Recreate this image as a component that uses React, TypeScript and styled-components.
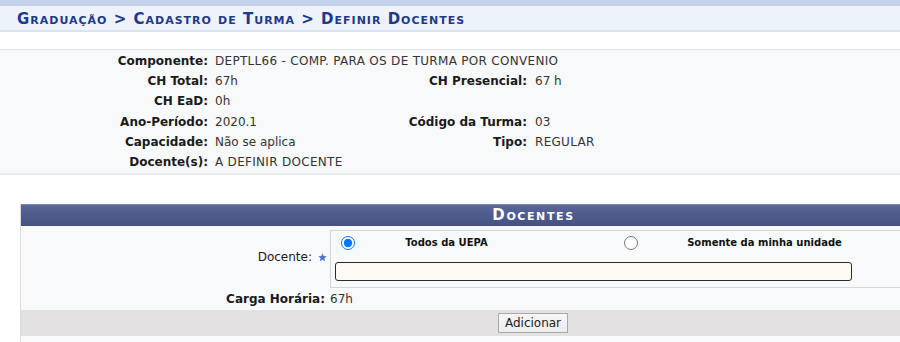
import React from "react";
import styled, { createGlobalStyle } from "styled-components";

const Global = createGlobalStyle`
  html, body { margin: 0; padding: 0; background: #fff; }
  body { font-family: "DejaVu Sans", Verdana, sans-serif; font-size: 12px; color: #222; overflow: hidden; width: 900px; }
`;

const Page = styled.div`
  width: 900px;
  overflow: hidden;
`;

const TopStripe = styled.div`
  height: 6px;
  background: #c4d2eb;
`;

const TitleBar = styled.h2`
  margin: 0;
  height: 26px;
  box-sizing: border-box;
  padding: 5px 0 0 17px;
  background: #eef2fa;
  border-bottom: 2px solid #dbe3f1;
  color: #1e3a87;
  font-size: 15px;
  font-weight: bold;
  font-variant: small-caps;
  letter-spacing: 1px;
  line-height: 16px;
`;

const Spacer = styled.div<{ h: number }>`
  height: ${(p) => p.h}px;
`;

const InfoTable = styled.div`
  display: grid;
  grid-template-columns: 210px 195px 124px 1fr;
  grid-auto-rows: 20.2px;
  align-items: center;
  background: #f8f9fb;
  border-top: 1px solid #e4e4e4;
  border-bottom: 2px solid #e9e9e9;
  padding: 1px 0 1px;
`;

const Label = styled.div`
  text-align: right;
  font-weight: bold;
  color: #1a1a1a;
  padding-right: 2px;
  white-space: nowrap;
`;

const Value = styled.div<{ span?: number; pad?: number; caps?: boolean }>`
  padding-left: ${(p) => p.pad ?? 5}px;
  color: #333;
  white-space: nowrap;
  grid-column: span ${(p) => p.span ?? 1};
  letter-spacing: ${(p) => (p.caps ? "0.3px" : "0")};
`;

const Panel = styled.div`
  margin-left: 20px;
  width: 1025px;
  border-left: 1px solid #dcdcdc;
  border-bottom: 2px solid #e2e2e2;
  background: #f8f9fb;
`;

const PanelHeader = styled.div`
  height: 22px;
  background: linear-gradient(#5a6898 0%, #4e5c8e 45%, #45527f 100%);
  border-top: 1px solid #7d88ad;
  box-sizing: border-box;
  color: #fff;
  text-align: center;
  font-weight: bold;
  font-variant: small-caps;
  font-size: 15px;
  letter-spacing: 1.6px;
  line-height: 20px;
`;

const FormRow = styled.div`
  display: grid;
  grid-template-columns: 309px 1fr;
  align-items: center;
`;

const FormLabel = styled.div<{ bold?: boolean }>`
  text-align: right;
  padding-right: ${(p) => (p.bold ? 5 : 0)}px;
  font-weight: ${(p) => (p.bold ? "bold" : "normal")};
  color: #1a1a1a;
  display: flex;
  justify-content: flex-end;
  align-items: center;
  gap: 6px;
  white-space: nowrap;
`;

const Star = styled.svg`
  width: 9px;
  height: 9px;
  margin-right: 3px;
  margin-top: 1px;
`;

const FieldBox = styled.div`
  margin: 4px 0 0 0;
  border: 1px solid #d6d6d6;
  height: 58px;
  box-sizing: border-box;
  padding: 5px 0 0 4px;
  width: 720px;
`;

const RadioGrid = styled.div`
  display: grid;
  grid-template-columns: 25px 173px 113px 237px;
  align-items: center;
  height: 14px;
`;

const RadioCell = styled.div<{ right?: boolean }>`
  display: flex;
  justify-content: ${(p) => (p.right ? "flex-end" : "flex-start")};
  padding-right: ${(p) => (p.right ? 8 : 0)}px;
  padding-left: ${(p) => (p.right ? 0 : 6)}px;
`;

const Radio = styled.input`
  width: 14px;
  height: 14px;
  margin: 0;
`;

const RadioText = styled.div`
  text-align: center;
  font-size: 10px;
  font-weight: bold;
  color: #111;
  margin-top: -1px;
`;

const TextInput = styled.input`
  display: block;
  margin: 12px 0 0 0;
  width: 517px;
  height: 19px;
  box-sizing: border-box;
  border: 1.5px solid #2b2b2b;
  border-radius: 3px;
  background: #fdf9f3;
`;

const CargaRow = styled.div`
  display: grid;
  grid-template-columns: 309px 1fr;
  height: 22px;
  align-items: center;
`;

const CargaValue = styled.div`
  color: #333;
  padding-left: 0;
`;

const Footer = styled.div`
  background: #e3e1e1;
  height: 26px;
  display: flex;
  justify-content: center;
  align-items: center;
  width: 1025px;
  box-sizing: border-box;
  margin-left: -1px;
  border-left: 1px solid #dcdcdc;
`;

const Button = styled.button`
  font-family: "DejaVu Sans", Verdana, sans-serif;
  font-size: 12px;
  color: #222;
  height: 20px;
  padding: 0 6px;
  background: linear-gradient(#f6f6f6, #ececec);
  border: 1px solid #a9a9a9;
  border-radius: 0;
`;

const BottomStrip = styled.div`
  height: 6px;
`;

const rows: Array<[string, string, string?, string?]> = [
  ["CH Total:", "67h", "CH Presencial:", "67 h"],
  ["CH EaD:", "0h"],
  ["Ano-Período:", "2020.1", "Código da Turma:", "03"],
  ["Capacidade:", "Não se aplica", "Tipo:", "REGULAR"],
  ["Docente(s):", "A DEFINIR DOCENTE"],
];

export default function App() {
  return (
    <Page>
      <Global />
      <TopStripe />
      <TitleBar>Graduação &gt; Cadastro de Turma &gt; Definir Docentes</TitleBar>
      <Spacer h={17} />
      <InfoTable>
        <Label>Componente:</Label>
        <Value span={3} caps>
          DEPTLL66 - COMP. PARA OS DE TURMA POR CONVENIO
        </Value>
        {rows.map(([l1, v1, l2, v2]) => (
          <React.Fragment key={l1}>
            <Label>{l1}</Label>
            <Value caps={/^[A-Z ]+$/.test(v1)}>{v1}</Value>
            <Label>{l2 ?? ""}</Label>
            <Value pad={6} caps={v2 === "REGULAR"}>
              {v2 ?? ""}
            </Value>
          </React.Fragment>
        ))}
      </InfoTable>
      <Spacer h={29} />
      <Panel>
        <PanelHeader>Docentes</PanelHeader>
        <FormRow>
          <FormLabel>
            Docente:
            <Star viewBox="0 0 10 10">
              <polygon
                points="5,0.3 6.3,3.4 9.7,3.6 7.1,5.8 7.9,9.2 5,7.4 2.1,9.2 2.9,5.8 0.3,3.6 3.7,3.4"
                fill="#4f74c9"
              />
            </Star>
          </FormLabel>
          <FieldBox>
            <RadioGrid>
              <RadioCell>
                <Radio type="radio" name="docente" defaultChecked />
              </RadioCell>
              <RadioText>Todos da UEPA</RadioText>
              <RadioCell right>
                <Radio type="radio" name="docente" />
              </RadioCell>
              <RadioText>Somente da minha unidade</RadioText>
            </RadioGrid>
            <TextInput type="text" />
          </FieldBox>
        </FormRow>
        <CargaRow>
          <FormLabel bold>Carga Horária:</FormLabel>
          <CargaValue>67h</CargaValue>
        </CargaRow>
        <Footer>
          <Button>Adicionar</Button>
        </Footer>
        <BottomStrip />
      </Panel>
    </Page>
  );
}
